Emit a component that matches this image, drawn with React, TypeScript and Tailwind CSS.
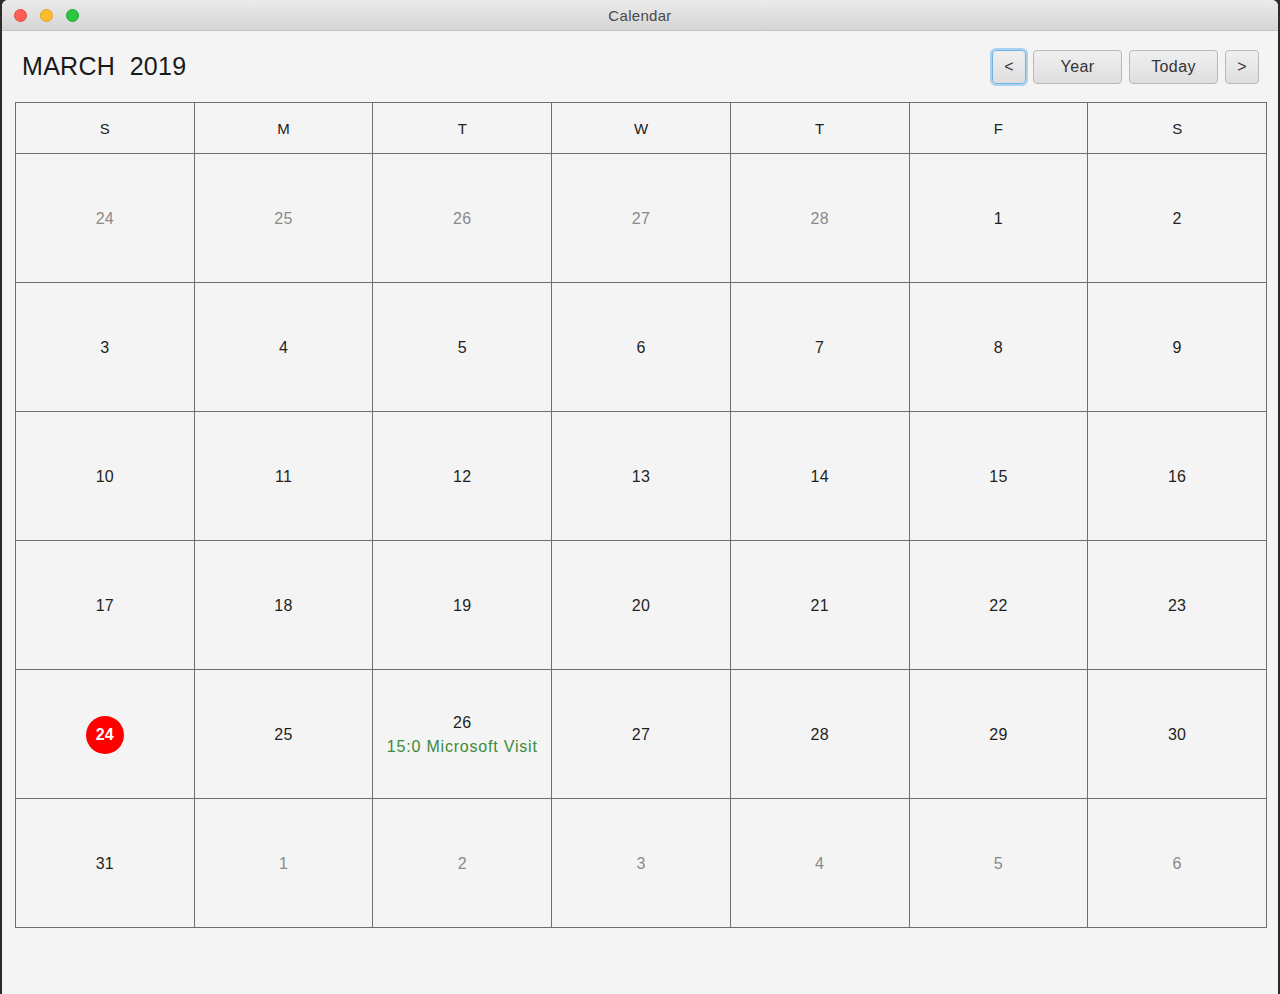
import React from "react";

const days = ["S", "M", "T", "W", "T", "F", "S"];

type Cell = { n: number; muted?: boolean; today?: boolean; event?: string };

const weeks: Cell[][] = [
  [24, 25, 26, 27, 28].map((n) => ({ n, muted: true })).concat([{ n: 1 }, { n: 2 }]),
  [3, 4, 5, 6, 7, 8, 9].map((n) => ({ n })),
  [10, 11, 12, 13, 14, 15, 16].map((n) => ({ n })),
  [17, 18, 19, 20, 21, 22, 23].map((n) => ({ n })),
  [
    { n: 24, today: true },
    { n: 25 },
    { n: 26, event: "15:0 Microsoft Visit" },
    { n: 27 },
    { n: 28 },
    { n: 29 },
    { n: 30 },
  ],
  [{ n: 31 }].concat([1, 2, 3, 4, 5, 6].map((n) => ({ n, muted: true }))),
];

const NavButton = ({ label, width, focused }: { label: string; width: string; focused?: boolean }) => (
  <button
    className={
      "h-[34px] rounded-[4px] border bg-gradient-to-b from-[#f0f0f0] to-[#dedede] text-[16px] text-[#333] tracking-[0.4px] flex items-center justify-center " +
      width +
      (focused ? " border-[#6fb3e6] ring-2 ring-[#8cc4ee]/70" : " border-[#b9b9b9]")
    }
  >
    {label}
  </button>
);

export default function App() {
  return (
    <div
      className="w-[1280px] h-[994px] bg-[#2b2b2b] flex flex-col overflow-hidden"
      style={{ fontFamily: '"Liberation Sans", Arial, sans-serif' }}
    >
      <div className="mx-[2px] flex-1 flex flex-col bg-[#f4f4f4] rounded-t-[6px] overflow-hidden">
        {/* title bar */}
        <div className="h-[31px] relative flex items-center justify-center pt-[3px] bg-gradient-to-b from-[#ebebeb] to-[#d5d5d5] border-b border-[#c4c4c4]">
          <div className="absolute left-[12px] top-[9px] flex gap-[13px]">
            <span className="w-[13px] h-[13px] rounded-full bg-[#fd5f57] border border-[#e2463f]" />
            <span className="w-[13px] h-[13px] rounded-full bg-[#febc2e] border border-[#e1a116]" />
            <span className="w-[13px] h-[13px] rounded-full bg-[#2ac840] border border-[#1aab29]" />
          </div>
          <span className="text-[15px] text-[#4a4a4a] tracking-[0.3px]">Calendar</span>
        </div>

        {/* header */}
        <div className="flex items-center justify-between pl-[20px] pr-[19px] pt-[17px] pb-[16px]">
          <h1 className="text-[25px] text-[#1a1a1a] whitespace-pre tracking-[0.3px]">MARCH  2019</h1>
          <div className="flex gap-[7px]">
            <NavButton label="<" width="w-[34px]" focused />
            <NavButton label="Year" width="w-[89px]" />
            <NavButton label="Today" width="w-[89px]" />
            <NavButton label=">" width="w-[34px]" />
          </div>
        </div>

        {/* grid */}
        <div className="ml-[13px] w-[1252px] border-l border-t border-[#6e6e6e] grid grid-cols-7">
          {days.map((d, i) => (
            <div
              key={"h" + i}
              className="h-[51px] pt-[3px] border-r border-b border-[#6e6e6e] flex items-center justify-center text-[15px] text-[#222]"
            >
              {d}
            </div>
          ))}
          {weeks.flat().map((c, i) => (
            <div
              key={i}
              className="h-[129px] pt-[2px] border-r border-b border-[#6e6e6e] flex flex-col items-center justify-center text-[16px] tracking-[0.3px]"
            >
              {c.today ? (
                <span className="w-[38px] h-[38px] rounded-full bg-[#fe0000] text-white font-bold flex items-center justify-center">
                  {c.n}
                </span>
              ) : (
                <span className={c.muted ? "text-[#8a8a8a]" : "text-[#1f1f1f]"}>{c.n}</span>
              )}
              {c.event && <span className="text-[#3b8b3b] tracking-[0.8px]">{c.event}</span>}
            </div>
          ))}
        </div>
      </div>
    </div>
  );
}
